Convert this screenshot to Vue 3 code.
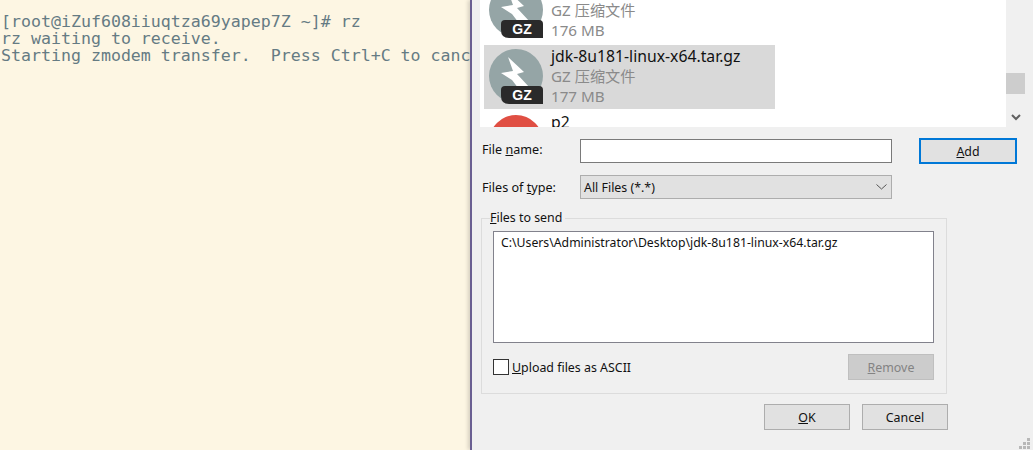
<script setup>
const rows = [
  { name: 'jdk-8u171-linux-i586.tar.gz', type: 'GZ 压缩文件', size: '176 MB', selected: false, kind: 'gz' },
  { name: 'jdk-8u181-linux-x64.tar.gz', type: 'GZ 压缩文件', size: '177 MB', selected: true, kind: 'gz' },
  { name: 'p2', type: '', size: '', selected: false, kind: 'red' },
]
</script>

<template>
  <div class="screen">
    <pre class="terminal">[root@iZuf608iiuqtza69yapep7Z ~]# rz
rz waiting to receive.
Starting zmodem transfer.  Press Ctrl+C to cancel.</pre>
    <section class="dialog">
      <div class="browser">
        <div class="list">
          <div class="list-inner">
            <div v-for="row in rows" :key="row.name" class="row" :class="{ selected: row.selected }">
              <svg v-if="row.kind === 'gz'" class="file-icon" width="55" height="56" viewBox="0 0 55 56">
                <circle cx="27" cy="27" r="27" fill="#95a5a6" />
                <path d="M19 8 L35 23 L28 25 L41 39 L33 44 L23 31 L12 24 L24 22 Z" fill="#fff" />
                <path d="M16 37 H50 Q54 37 54 41 V55 H20 Q12 55 12 47 V41 Q12 37 16 37 Z" fill="#2a2a2a" />
                <text x="33" y="51" text-anchor="middle" class="badge-text">GZ</text>
              </svg>
              <svg v-else class="file-icon" width="55" height="56" viewBox="0 0 55 56">
                <circle cx="27" cy="27" r="27" fill="#e04f43" />
              </svg>
              <div class="meta">
                <div class="name">{{ row.name }}</div>
                <div class="sub">{{ row.type }}</div>
                <div class="sub">{{ row.size }}</div>
              </div>
            </div>
          </div>
        </div>
        <div class="scrollbar">
          <div class="thumb"></div>
          <svg class="arrow" width="10" height="7" viewBox="0 0 10 7">
            <path d="M1 1 L5 5 L9 1" fill="none" stroke="#606060" stroke-width="2" />
          </svg>
        </div>
      </div>

      <div class="form-row first">
        <label class="label">File <u>n</u>ame:</label>
        <input class="field" type="text" />
        <button class="btn add"><u>A</u>dd</button>
      </div>
      <div class="form-row second">
        <label class="label">Files of <u>t</u>ype:</label>
        <div class="select">
          <span>All Files (*.*)</span>
          <svg width="11" height="6" viewBox="0 0 11 6">
            <path d="M0.5 0.5 L5.5 5 L10.5 0.5" fill="none" stroke="#555" stroke-width="1" />
          </svg>
        </div>
      </div>

      <fieldset class="group">
        <legend><u>F</u>iles to send</legend>
        <div class="send-list">C:\Users\Administrator\Desktop\jdk-8u181-linux-x64.tar.gz</div>
        <div class="send-foot">
          <label class="check">
            <span class="box"></span>
            <span><u>U</u>pload files as ASCII</span>
          </label>
          <button class="btn remove" disabled><u>R</u>emove</button>
        </div>
      </fieldset>

      <div class="actions">
        <button class="btn"><u>O</u>K</button>
        <button class="btn">Cancel</button>
      </div>

      <svg class="grip" width="12" height="12" viewBox="0 0 12 12">
        <g fill="#b8b8b8">
          <rect x="8" y="0" width="3" height="3" />
          <rect x="4" y="4" width="3" height="3" />
          <rect x="8" y="4" width="3" height="3" />
          <rect x="0" y="8" width="3" height="3" />
          <rect x="4" y="8" width="3" height="3" />
          <rect x="8" y="8" width="3" height="3" />
        </g>
      </svg>
    </section>
  </div>
</template>

<style>
html, body { margin: 0; background: #fdf6e3; }
</style>

<style scoped>
.screen {
  display: flex;
  width: 1033px;
  height: 450px;
  overflow: hidden;
  font-family: "Noto Sans", sans-serif;
  font-size: 12.4px;
  color: #111;
}
.terminal {
  flex: none;
  width: 470px;
  height: 450px;
  margin: 0;
  padding: 13px 0 0 1px;
  box-sizing: border-box;
  overflow: hidden;
  background: #fdf6e3;
  color: #657b83;
  font-family: "DejaVu Sans Mono", monospace;
  font-size: 16.6px;
  line-height: 17px;
}
.dialog {
  position: relative;
  flex: 1;
  box-sizing: border-box;
  height: 450px;
  background: #f0f0f0;
  border-left: 2px solid #6a5f92;
  box-shadow: -2px 0 4px rgba(0, 0, 0, 0.16);
}
.browser {
  display: flex;
  height: 127px;
  margin-left: 8px;
}
.list {
  width: 526px;
  height: 127px;
  overflow: hidden;
  background: #fff;
}
.list-inner {
  margin-top: -21px;
  padding-left: 4px;
}
.row {
  display: flex;
  width: 291px;
  height: 64px;
  margin-bottom: 2px;
  box-sizing: border-box;
  padding: 4px 0 0 5px;
}
.row.selected { background: #d9d9d9; }
.file-icon { flex: none; }
.badge-text {
  fill: #fff;
  font-family: "Liberation Sans", sans-serif;
  font-size: 14px;
  font-weight: 700;
}
.meta {
  margin-left: 7px;
  margin-top: -2px;
  font-family: "Noto Sans", "Noto Sans CJK SC", sans-serif;
  font-size: 15.75px;
  line-height: 20px;
  white-space: nowrap;
}
.name { color: #111; line-height: 19px; }
.sub { color: #8a8a8a; font-size: 15.2px; }
.scrollbar {
  position: relative;
  width: 19px;
}
.thumb {
  width: 19px;
  height: 21px;
  margin-top: 73px;
  background: #cdcdcd;
}
.arrow {
  display: block;
  margin: 20px 0 0 5px;
}
.form-row {
  display: flex;
  align-items: center;
  margin-left: 10px;
}
.form-row.first { margin-top: 11px; height: 26px; }
.form-row.second { margin-top: 11px; height: 24px; }
.label {
  width: 98px;
  flex: none;
  font-size: 12.6px;
}
.first .label { margin-bottom: 4px; }
.field {
  width: 312px;
  height: 24px;
  box-sizing: border-box;
  margin: 0;
  border: 1px solid #7a7a7a;
  background: #fff;
  outline: none;
}
.select {
  display: flex;
  align-items: center;
  justify-content: space-between;
  width: 312px;
  height: 24px;
  box-sizing: border-box;
  padding: 0 4px 0 3px;
  border: 1px solid #adadad;
  background: #e1e1e1;
}
.btn {
  width: 86px;
  height: 26px;
  box-sizing: border-box;
  margin: 0;
  padding: 0;
  border: 1px solid #adadad;
  background: #e1e1e1;
  color: #111;
  font: inherit;
}
.btn.add {
  width: 98px;
  margin-left: 27px;
  border: 2px solid #0078d7;
}
.group {
  width: 466px;
  height: 184px;
  box-sizing: border-box;
  margin: 11px 0 0 9px;
  padding: 5px 12px 0 11px;
  border: 1px solid #dcdcdc;
  min-width: 0;
}
.group legend {
  margin-left: -3px;
  padding: 0 3px 0 0;
  line-height: 16px;
  font-size: 12.4px;
}
.send-list {
  width: 441px;
  height: 112px;
  box-sizing: border-box;
  padding: 3px 7px;
  border: 1px solid #82828c;
  background: #fff;
  font-size: 12.25px;
  line-height: 16px;
  white-space: nowrap;
}
.send-foot {
  display: flex;
  align-items: center;
  justify-content: space-between;
  width: 441px;
  margin-top: 11px;
}
.check {
  display: flex;
  align-items: center;
  gap: 3px;
}
.box {
  width: 16px;
  height: 16px;
  box-sizing: border-box;
  border: 1px solid #333;
  background: #fff;
}
.btn.remove {
  background: #cccccc;
  color: #838383;
  border-color: #bfbfbf;
}
.actions {
  display: flex;
  gap: 12px;
  width: 476px;
  justify-content: flex-end;
  margin-top: 10px;
}
.grip {
  position: absolute;
  right: 2px;
  bottom: 0;
}
</style>
